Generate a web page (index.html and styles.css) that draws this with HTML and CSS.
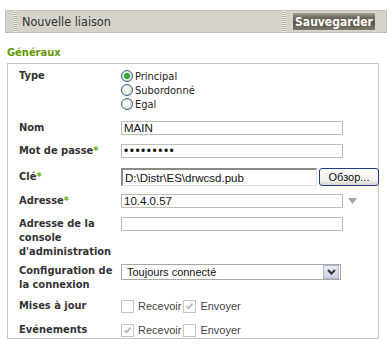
FILE: index.html
```html
<!DOCTYPE html>
<html lang="fr">
<head>
    <meta charset="UTF-8">
    <title>Nouvelle liaison</title>
    <link rel="stylesheet" href="styles.css">
</head>
<body>
    <!-- toolbar with title and save button -->
    <div class="toolbar">
        <span class="sep"></span>
        <span class="title">Nouvelle liaison</span>
        <span class="sep"></span>
        <button class="save">Sauvegarder</button>
    </div>

    <h2 class="group">Généraux</h2>

    <div class="box">
        <div class="row row-type">
            <div class="label">Type</div>
            <div class="field radios">
                <label class="opt"><input type="radio" name="type" checked> Principal</label>
                <label class="opt"><input type="radio" name="type"> Subordonné</label>
                <label class="opt"><input type="radio" name="type"> Egal</label>
            </div>
        </div>

        <div class="row row-nom">
            <div class="label">Nom</div>
            <div class="field"><input class="text" type="text" value="MAIN"></div>
        </div>

        <div class="row row-pass">
            <div class="label">Mot de passe<span class="req">*</span></div>
            <div class="field"><input class="text pass" type="password" value="secret123"></div>
        </div>

        <div class="row row-file">
            <div class="label">Clé<span class="req">*</span></div>
            <div class="field file">
                <input class="filename" type="text" value="D:\Distr\ES\drwcsd.pub">
                <button class="browse">Обзор...</button>
            </div>
        </div>

        <div class="row row-addr">
            <div class="label">Adresse<span class="req">*</span></div>
            <div class="field">
                <input class="text" type="text" value="10.4.0.57">
                <svg class="more" width="9" height="7" viewBox="0 0 9 7"><polygon points="0,0 9,0 4.5,6" fill="#a3a39a"/></svg>
            </div>
        </div>

        <div class="row row-console">
            <div class="label">Adresse de la console d'administration</div>
            <div class="field"><input class="text" type="text" value=""></div>
        </div>

        <div class="row row-conf">
            <div class="label">Configuration de la connexion</div>
            <div class="field">
                <div class="select">
                    <span class="value">Toujours connecté</span>
                    <span class="arrow">
                        <svg width="9" height="6" viewBox="0 0 9 6"><path d="M1 1 L4.5 4.5 L8 1" stroke="#333" stroke-width="2" fill="none"/></svg>
                    </span>
                </div>
            </div>
        </div>

        <div class="row row-upd">
            <div class="label">Mises à jour</div>
            <div class="field checks">
                <label class="chk"><input type="checkbox"> Recevoir</label>
                <label class="chk"><input type="checkbox" checked> Envoyer</label>
            </div>
        </div>

        <div class="row row-evt">
            <div class="label">Evénements</div>
            <div class="field checks">
                <label class="chk"><input type="checkbox" checked> Recevoir</label>
                <label class="chk"><input type="checkbox"> Envoyer</label>
            </div>
        </div>
    </div>
</body>
</html>
```

FILE: styles.css
```css
body {
    margin: 0;
    padding: 10px 5px 0;
    background-color: #fff;
    font-family: "DejaVu Sans Condensed", "DejaVu Sans", sans-serif;
    font-stretch: condensed;
    font-size: 11px;
    color: #222;
}

/* toolbar */
.toolbar {
    display: flex;
    align-items: center;
    height: 21px;
    background-color: #d5d2c9;
    border: 1px solid #c3c0b6;
}

.sep {
    width: 3px;
    height: 21px;
    margin-left: 8px;
    background-image: repeating-linear-gradient(180deg, #f4f3ef 0, #f4f3ef 1px, #a9a699 1px, #a9a699 2px);
}

.title {
    flex: 1;
    margin-left: 5px;
    font-size: 12.5px;
    color: #333;
}

.save {
    width: 82px;
    height: 17px;
    margin: 0 11px 0 8px;
    padding: 0;
    border: 0;
    color: #fff;
    font-family: inherit;
    font-stretch: condensed;
    font-weight: bold;
    font-size: 12px;
    background-color: #6c695a;
    background-image: linear-gradient(180deg, #a9a696 0%, #6f6c5d 25%, #57544a 60%, #7d7a6c 100%);
    cursor: pointer;
}

/* group title */
.group {
    margin: 13px 0 4px 2px;
    font-size: 11px;
    font-weight: bold;
    color: #669900;
}

/* form box */
.box {
    width: 372px;
    margin-left: 2px;
    padding: 5px 0 1px 11px;
    box-sizing: border-box;
    border: 1px solid #c9c7c0;
}

.row {
    display: flex;
    align-items: flex-start;
}

.row-type { margin-bottom: 10px; }
.row-nom { margin-bottom: 9px; }
.row-pass { margin-bottom: 10px; }
.row-file { margin-bottom: 8px; align-items: center; }
.row-addr { margin-bottom: 9px; }
.row-console { margin-bottom: 5px; }
.row-conf { margin-bottom: 7px; }
.row-upd { margin-bottom: 10px; }

.label {
    width: 102px;
    flex-shrink: 0;
    line-height: 14px;
    font-weight: bold;
    color: #333;
}

.req {
    color: #66aa00;
}

.field {
    display: flex;
    align-items: center;
}

/* radios */
.radios {
    flex-direction: column;
    align-items: flex-start;
}

.opt {
    display: flex;
    align-items: center;
    height: 14px;
    color: #222;
}

.opt input {
    appearance: none;
    width: 12px;
    height: 12px;
    margin: 0 2px 0 0;
    border: 1px solid #2c5d8a;
    border-radius: 50%;
    background: radial-gradient(circle at 40% 40%, #fff 0%, #e8e8e2 60%, #cfcfc6 100%);
}

.opt input:checked {
    background: radial-gradient(circle, #3fb83f 0, #21a121 2.5px, #e8e8e2 3.5px, #d4d4cc 100%);
}

/* text inputs */
.text,
.filename {
    box-sizing: border-box;
    height: 14px;
    margin: 0;
    padding: 0 2px;
    border: 1px solid #c0beb4;
    font-family: "Liberation Sans", Arial, sans-serif;
    font-size: 11.5px;
    color: #111;
    background: #fff;
}

.text {
    width: 222px;
}

.pass {
    font-size: 12px;
    letter-spacing: 1.5px;
}

.more {
    margin-left: 5px;
}

/* file field */
.filename {
    width: 196px;
    height: 18px;
    border: 1px solid #e2e0d8;
    border-top: 2px solid #8c8a82;
    border-left: 2px solid #8c8a82;
}

.browse {
    width: 60px;
    height: 18px;
    margin-left: 2px;
    padding: 0;
    border: 1px solid #1d3f8b;
    border-radius: 3px;
    font-family: "Liberation Sans", Arial, sans-serif;
    font-size: 11px;
    color: #111;
    background-image: linear-gradient(180deg, #ffffff 0%, #f1f0ea 70%, #d9d6cb 100%);
}

/* select */
.select {
    box-sizing: border-box;
    display: flex;
    align-items: center;
    justify-content: space-between;
    width: 220px;
    height: 16px;
    border: 1px solid #a9a8a0;
    background: #fff;
}

.select .value {
    padding-left: 5px;
    font-family: "Liberation Sans", Arial, sans-serif;
    font-size: 11px;
    color: #111;
}

.arrow {
    display: flex;
    align-items: center;
    justify-content: center;
    box-sizing: border-box;
    width: 16px;
    height: 14px;
    margin-right: 1px;
    border: 1px solid #b3b6c8;
    background-image: linear-gradient(180deg, #e9ebf6 0%, #cdd1e4 100%);
}

/* checkboxes */
.checks {
    height: 14px;
}

.chk {
    display: flex;
    align-items: center;
    margin-right: 2px;
    font-family: "Liberation Sans", Arial, sans-serif;
    font-size: 11px;
    color: #444;
}

.chk input {
    appearance: none;
    width: 13px;
    height: 13px;
    margin: 0 4px 0 0;
    border: 1px solid #c6c4bb;
    background: #fff;
}

.chk input:checked {
    background: #fff url("data:image/svg+xml;utf8,<svg xmlns='http://www.w3.org/2000/svg' width='11' height='11'><path d='M2.5 5 L4.5 7.5 L8.5 2.5' stroke='%23b4b2a8' stroke-width='1.6' fill='none'/></svg>") center no-repeat;
}
```
